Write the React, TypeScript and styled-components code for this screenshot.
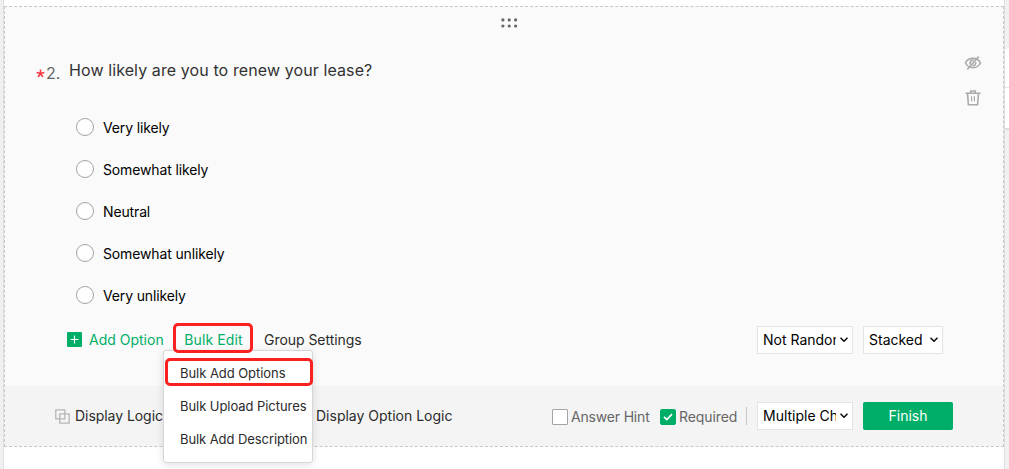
import React from 'react';
import styled, { createGlobalStyle } from 'styled-components';

const Global = createGlobalStyle`
  * { box-sizing: border-box; }
  body { margin: 0; background: #fff; overflow: hidden; font-family: Inter, "Liberation Sans", sans-serif; }
`;
const Page = styled.div`display: flex; width: 1009px; height: 469px;`;
const LeftGutter = styled.div`width: 4px; background: #f0f0f0; border-right: 1px solid #dedede;`;
const RightGutter = styled.div`width: 5px; background: #f1f1f1; border-left: 1px solid #dcdcdc; padding-top: 49px;`;
const SideTab = styled.div`height: 39px; background: #fff; border-bottom: 1px solid #e4e4e4; & + & { height: 42px; border-bottom: 2px solid #ddd; }`;
const Main = styled.main`width: 1000px; padding-top: 6px;`;
const Card = styled.section`height: 441px; border: 1px dashed #c8c8c8; background: #fafafa; display: flex; flex-direction: column;`;
const DragHandle = styled.div`height: 46px; padding: 11px 0 0 10px; display: flex; justify-content: center;`;
const Body = styled.div`display: flex; justify-content: space-between; height: 258px;`;
const Question = styled.div`padding-left: 31px;`;
const Heading = styled.div`display: flex; height: 45px;`;
const Label = styled.span<{ $size?: number; $spacing?: number; $color?: string }>`
  font-size: ${p => p.$size ?? 14}px;
  letter-spacing: ${p => p.$spacing ?? 0}px;
  color: ${p => p.$color ?? '#2b2b2b'};
  line-height: 20px;
  white-space: nowrap;
`;
const Star = styled.span`width: 9px; padding-top: 9px;`;
const Num = styled(Label)`width: 24px; padding: 10px 0 0 1px;`;
const Title = styled(Label)`padding-top: 7px;`;
const Options = styled.div`padding: 20px 0 0 40px;`;
const Option = styled.label`height: 42px; display: flex; gap: 9px;`;
const Radio = styled.span`width: 18px; height: 18px; border: 1px solid #a3a3a3; border-radius: 50%; background: #fff;`;
const Tools = styled.div`width: 48px; padding: 1px 0 0 8.5px; display: flex; flex-direction: column; gap: 17px;`;
const ActionRow = styled.div`height: 75px; padding: 11px 60px 0 62px; display: flex; align-items: flex-start;`;
const AddButton = styled.span`display: flex; gap: 7px; align-items: center; width: 106px; height: 30px; padding-top: 5px;`;
const BulkEdit = styled.div`
  position: relative; width: 80px; height: 30px; margin-top: 1px; display: flex; justify-content: center; align-items: center; padding: 3px 0 0 1px;
  &::after { content: ''; position: absolute; inset: 0; z-index: 2; border: 3px solid #fb2121; border-radius: 5px; }
`;
const GroupSettings = styled.span`margin-left: 11px; padding-top: 7px; flex: 1;`;
const Selects = styled.div`display: flex; gap: 10px; padding-top: 4px;`;
const SelectBox = styled.div<{ $width: number; $clip: number }>`
  width: ${p => p.$width}px; height: 28px; border: 1px solid #e4e4e4; background: #fff; padding: 0 4px 0 5px;
  display: flex; align-items: center; justify-content: space-between;
  & > span { width: ${p => p.$clip}px; overflow: hidden; }
`;
const Menu = styled.div`
  position: absolute; left: -10px; top: 27px; width: 150px; height: 113px; z-index: 1; background: #fff;
  border: 1px solid #d6d6d6; border-radius: 3px; box-shadow: 0 2px 8px rgba(0,0,0,.12); padding-top: 7px;
`;
const MenuItem = styled.div<{ $marked?: boolean }>`
  height: ${p => p.$marked ? 28 : 33}px; width: 148px; margin-bottom: ${p => p.$marked ? 3 : 0}px; margin-left: ${p => p.$marked ? 1 : 0}px;
  border: ${p => p.$marked ? '3px solid #fb2121' : '0'}; border-radius: 5px;
  padding-left: ${p => p.$marked ? 12 : 16}px; padding-top: ${p => p.$marked ? 2 : 0}px; display: flex; align-items: center;
`;
const Footer = styled.footer`height: 60px; background: #f4f4f4; display: flex; align-items: center; padding: 0 50px; `;
const Left = styled.div`flex: 1; display: flex; align-items: center; gap: 5px;`;
const LogicLabel = styled(Label)`width: 236px;`;
const Check = styled.span<{ $on?: boolean }>`width: 16px; height: 16px; border: 1px solid ${p => p.$on ? '#00ae68' : '#a5a5a5'}; border-radius: ${p => p.$on ? 2 : 1}px; background: ${p => p.$on ? '#00ae68' : '#fff'}; display: flex; align-items: center; justify-content: center; margin-top: 2px;`;
const CheckItem = styled.label<{ $width: number }>`width: ${p => p.$width}px; display: flex; align-items: center; gap: 3px; & > ${Label} { padding-top: 2px; }`;
const Divider = styled.span`width: 1px; height: 18px; background: #c8c8c8; margin-right: 10px;`;
const Finish = styled.button`width: 90px; height: 28px; border: 0; border-radius: 2px; background: #00ae68; margin-left: 10px; padding: 0; font-family: inherit;`;
const Caret = styled.span`position: absolute; z-index: 3; left: 36px; bottom: 3px; border: 4px solid transparent; border-top: 0; border-bottom: 3px solid #fff;`;

const Chevron = () => <svg width="8" height="6" viewBox="0 0 8 6"><path d="M1 1.2 4 4.2 7 1.2" fill="none" stroke="#111" strokeWidth="1.6" strokeLinecap="round" strokeLinejoin="round" /></svg>;

const options = ['Very likely', 'Somewhat likely', 'Neutral', 'Somewhat unlikely', 'Very unlikely'];

export default function App() {
  return (
    <Page>
      <Global />
      <LeftGutter />
      <Main>
        <Card>
          <DragHandle>
            <svg width="17" height="11" viewBox="0 0 17 11" fill="#666">
              {[1.9, 8.2, 14.6].map(x => [1.9, 8].map(y => <circle key={`${x}-${y}`} cx={x} cy={y} r="1.6" />))}
            </svg>
          </DragHandle>
          <Body>
            <Question>
              <Heading>
                <Star>
                  <svg width="9" height="9" viewBox="0 0 9 9"><path d="M4.5 .5V4.5M.6 3.4 4.5 4.5 8.4 3.4M2.1 8 4.5 4.5 6.9 8" fill="none" stroke="#fb3b45" strokeWidth="1.6" /></svg>
                </Star>
                <Num $size={16} $color="#666">2.</Num>
                <Title $size={16} $spacing={0.1} $color="#333">How likely are you to renew your lease?</Title>
              </Heading>
              <Options>
                {options.map(text => (
                  <Option key={text}><Radio /><Label $spacing={-0.14} $color="#000">{text}</Label></Option>
                ))}
              </Options>
            </Question>
            <Tools>
              <svg width="18" height="18" viewBox="0 0 18 18" fill="none" stroke="#aaa" strokeWidth="1.6">
                <path d="M1.5 9C4.5 2.8 13.5 2.8 16.5 9C13.5 15.2 4.5 15.2 1.5 9Z" /><path d="M6.6 10.5A2.8 2.8 0 0 1 9.6 6.2M11.5 8A2.8 2.8 0 0 1 8.6 11.8" /><path d="M3.3 15.5 14.7 2.5" />
              </svg>
              <svg width="18" height="18" viewBox="0 0 18 18" fill="none" stroke="#aaa" strokeWidth="1.6">
                <path d="M1.5 4.3H16.5M6.7 3.7V2H11.3V3.7M3.5 4.3 4.4 15.8H13.6L14.5 4.3" /><path d="M7.6 7.3V12.3M10.4 7.3V12.3" strokeWidth="1.2" />
              </svg>
            </Tools>
          </Body>
          <ActionRow>
            <AddButton>
              <svg width="15" height="15" viewBox="0 0 15 15"><rect width="15" height="15" rx="1" fill="#00ae68" /><path d="M7.5 3.5V11.5M3.5 7.5H11.5" stroke="#fff" strokeWidth="1.1" /></svg>
              <Label $color="#00ae68">Add Option</Label>
            </AddButton>
            <BulkEdit>
              <Label $spacing={0.1} $color="#00ae68">Bulk Edit</Label>
              <Menu>
                <MenuItem $marked><Label $size={13} $spacing={-0.05}>Bulk Add Options</Label></MenuItem>
                <MenuItem><Label $size={13} $spacing={-0.06}>Bulk Upload Pictures</Label></MenuItem>
                <MenuItem><Label $size={13} $spacing={-0.08}>Bulk Add Description</Label></MenuItem>
              </Menu>
              <Caret />
            </BulkEdit>
            <GroupSettings><Label $spacing={-0.04}>Group Settings</Label></GroupSettings>
            <Selects>
              <SelectBox $width={96} $clip={73}><Label $color="#000">Not Random</Label><Chevron /></SelectBox>
              <SelectBox $width={80} $clip={58}><Label $color="#000">Stacked</Label><Chevron /></SelectBox>
            </Selects>
          </ActionRow>
          <Footer>
            <Left>
              <svg width="15" height="15" viewBox="0 0 15 15" fill="none" stroke="#b5b5b5" strokeWidth="1.3"><path d="M4.5 9.8H.8V.8H9.8V4.5M9.8 4.8H14.2V14.2H4.8V9.8M9.8 4.8V9.8H4.8V4.8Z" /></svg>
              <LogicLabel $spacing={-0.05}>Display Logic</LogicLabel>
              <Label>Display Option Logic</Label>
            </Left>
            <CheckItem $width={108}><Check /><Label $spacing={-0.18} $color="#666">Answer Hint</Label></CheckItem>
            <CheckItem $width={86}>
              <Check $on><svg width="10" height="8" viewBox="0 0 10 8"><path d="M1 3.8 3.8 6.5 9 1.2" fill="none" stroke="#fff" strokeWidth="1.7" /></svg></Check>
              <Label $spacing={-0.1} $color="#666">Required</Label>
            </CheckItem>
            <Divider />
            <SelectBox $width={96} $clip={73}><Label $color="#000">Multiple Choice</Label><Chevron /></SelectBox>
            <Finish><Label $color="#fff">Finish</Label></Finish>
          </Footer>
        </Card>
      </Main>
      <RightGutter><SideTab /><SideTab /></RightGutter>
    </Page>
  );
}
